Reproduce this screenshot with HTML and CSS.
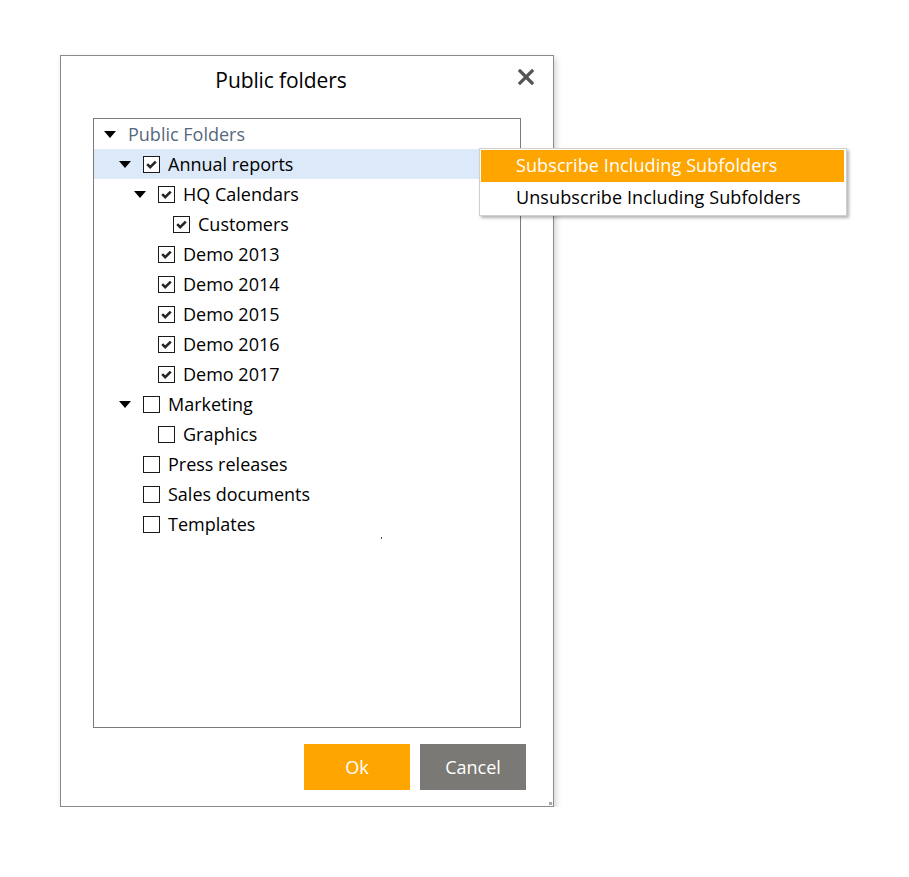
FILE: index.html
```html
<!DOCTYPE html>
<html>
<head>
<meta charset="utf-8">
<link rel="stylesheet" href="styles.css">
</head>
<body>
<div class="dialog">
  <div class="dialog-head">
    <div class="dialog-title">Public folders</div>
    <svg class="close" width="16" height="16" viewBox="0 0 16 16"><path d="M2 2 L14 14 M14 2 L2 14" stroke="#555" stroke-width="3.2" stroke-linecap="square"/></svg>
  </div>
  <div class="tree">
    <div class="row l0"><span class="tog"><i class="tri"></i></span><span class="label root">Public Folders</span></div>
    <div class="row l1 sel"><span class="tog"><i class="tri"></i></span><span class="cb on"></span><span class="label">Annual reports</span></div>
    <div class="row l2"><span class="tog"><i class="tri"></i></span><span class="cb on"></span><span class="label">HQ Calendars</span></div>
    <div class="row l3"><span class="tog"></span><span class="cb on"></span><span class="label">Customers</span></div>
    <div class="row l2"><span class="tog"></span><span class="cb on"></span><span class="label">Demo 2013</span></div>
    <div class="row l2"><span class="tog"></span><span class="cb on"></span><span class="label">Demo 2014</span></div>
    <div class="row l2"><span class="tog"></span><span class="cb on"></span><span class="label">Demo 2015</span></div>
    <div class="row l2"><span class="tog"></span><span class="cb on"></span><span class="label">Demo 2016</span></div>
    <div class="row l2"><span class="tog"></span><span class="cb on"></span><span class="label">Demo 2017</span></div>
    <div class="row l1"><span class="tog"><i class="tri"></i></span><span class="cb"></span><span class="label">Marketing</span></div>
    <div class="row l2"><span class="tog"></span><span class="cb"></span><span class="label">Graphics</span></div>
    <div class="row l1"><span class="tog"></span><span class="cb"></span><span class="label">Press releases</span></div>
    <div class="row l1"><span class="tog"></span><span class="cb"></span><span class="label">Sales documents</span></div>
    <div class="row l1"><span class="tog"></span><span class="cb"></span><span class="label">Templates</span></div>
    <span class="speck"></span>
  </div>
  <div class="actions">
    <button class="btn ok">Ok</button>
    <button class="btn cancel">Cancel</button>
  </div>
  <span class="grip"></span>
  <div class="menu">
    <div class="menu-item active">Subscribe Including Subfolders</div>
    <div class="menu-item">Unsubscribe Including Subfolders</div>
  </div>
</div>
</body>
</html>
```
FILE: styles.css
```css
html, body {
  margin: 0;
  padding: 0;
  background: #fff;
}
body {
  padding: 55px 0 0 60px;
  font-family: "Open Sans", "Noto Sans", sans-serif;
  color: #000;
}
.dialog {
  position: relative;
  width: 492px;
  height: 750px;
  border: 1px solid #8a8a8a;
  background: #fff;
  box-shadow: 2px 3px 6px rgba(0,0,0,0.18);
  display: flex;
  flex-direction: column;
}
.dialog-head {
  position: relative;
  height: 62px;
  display: flex;
  align-items: center;
  justify-content: center;
  padding-right: 52px;
}
.dialog-title {
  font-size: 21px;
  margin-top: -14px;
  letter-spacing: -0.1px;
}
.close {
  position: absolute;
  right: 19px;
  top: 13px;
}
.tree {
  position: relative;
  margin: 0 32px 0 32px;
  height: 608px;
  border: 1px solid #7a7a7a;
  overflow: hidden;
}
.row {
  height: 30px;
  display: flex;
  align-items: center;
  font-size: 18px;
  letter-spacing: 0;
  white-space: nowrap;
}
.row.sel { background: #dce9f8; }
.row.l0 { padding-left: 10px; }
.row.l1 { padding-left: 25px; }
.row.l2 { padding-left: 40px; }
.row.l3 { padding-left: 55px; }
.tog {
  width: 24px;
  height: 30px;
  display: flex;
  align-items: center;
  flex: none;
}
.tri {
  display: block;
  width: 0;
  height: 0;
  border-left: 6px solid transparent;
  border-right: 6px solid transparent;
  border-top: 7px solid #000;
  margin-top: 1px;
}
.cb {
  width: 15px;
  height: 15px;
  border: 1px solid #1a1a1a;
  background: #fff;
  flex: none;
  margin-right: 8px;
  margin-top: 1px;
}
.cb.on {
  background: #fff url("data:image/svg+xml;utf8,<svg xmlns='http://www.w3.org/2000/svg' width='15' height='15' viewBox='0 0 15 15'><path d='M3.2 7.2 L6.2 10.2 L11.8 4.6' fill='none' stroke='%23262626' stroke-width='2.6'/></svg>") no-repeat 0 0;
}
.label { line-height: 30px; }
.label.root { color: #56687e; }
.speck {
  position: absolute;
  left: 287px;
  top: 418px;
  width: 1px;
  height: 2px;
  background: #5a5020;
}
.actions {
  display: flex;
  justify-content: flex-end;
  gap: 10px;
  padding: 16px 27px 0 0;
}
.btn {
  width: 106px;
  height: 46px;
  border: none;
  color: #fff;
  font-family: "Open Sans", "Noto Sans", sans-serif;
  font-size: 18px;
  letter-spacing: 0;
}
.btn.ok { background: #ffa500; }
.btn.cancel { background: #7b7975; }
.grip {
  position: absolute;
  right: 1px;
  bottom: 1px;
  width: 3px;
  height: 3px;
  background: #aaa;
}
.menu {
  position: absolute;
  left: 418px;
  top: 92px;
  width: 363px;
  padding: 1px 2px 1px 1px;
  border: 1px solid #d0d0d0;
  background: #fff;
  box-shadow: 2px 2px 3px rgba(0,0,0,0.3);
}
.menu-item {
  height: 32px;
  line-height: 31px;
  padding-left: 35px;
  font-size: 18px;
  letter-spacing: 0.1px;
  white-space: nowrap;
}
.menu-item.active {
  background: #ffa500;
  color: #fff;
}
```
